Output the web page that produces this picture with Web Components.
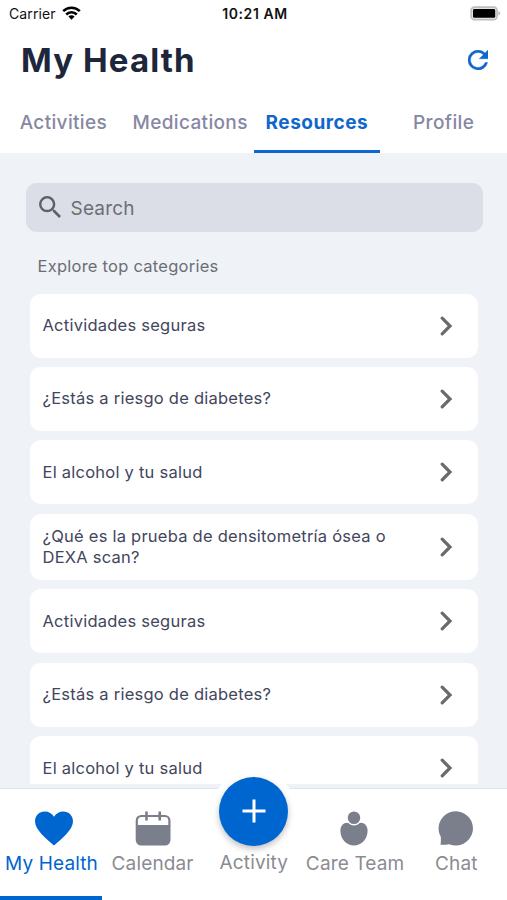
<!DOCTYPE html>
<html lang="en">
<head>
<meta charset="utf-8">
<title>My Health</title>
<style>
    body {
        margin: 0;
        font-family: Inter, "Liberation Sans", sans-serif;
    }
</style>
</head>
<body>
<health-app></health-app>

<script>
// Build a template from a string of markup
const makeTemplate = (html) => {
    const template = document.createElement("template");
    template.innerHTML = html;
    return template;
};

// Base class, clones the template of the subclass into a shadow root
class HealthElement extends HTMLElement{
    constructor(){
        super();
        this.attachShadow({mode: "open"});
        this.shadowRoot.appendChild(this.constructor.template.content.cloneNode(true));
    }
}


// Phone status bar
class StatusBar extends HealthElement{
    static template = makeTemplate(`
        <style>
        :host {
            display: grid;
            grid-template-columns: 1fr auto 1fr;
            align-items: center;
            height: 28px;
            padding: 0 7px 0 9px;
            box-sizing: border-box;
            color: #111;
            font-size: 14px;
            line-height: 28px;
        }
        .carrier {
            display: flex;
            align-items: center;
            gap: 6px;
            letter-spacing: 0.1px;
        }
        .carrier svg {
            margin-top: -2px;
        }
        .time {
            font-weight: 600;
            letter-spacing: 0.55px;
            margin-right: -1px;
        }
        .battery {
            justify-self: end;
            margin-top: -2px;
        }
        svg {
            display: block;
        }
        </style>
        <div class="carrier">
            <span>Carrier</span>
            <svg width="19" height="14" viewBox="0 0 19 14">
                <g fill="none" stroke="#000" stroke-width="2.6">
                    <path d="M1.2 5.2a11.8 11.8 0 0 1 16.6 0"/>
                    <path d="M4.2 8.5a7.5 7.5 0 0 1 10.6 0"/>
                </g>
                <path d="M9.5 13.7 6.4 10.6a4.4 4.4 0 0 1 6.2 0z"/>
            </svg>
        </div>
        <span class="time">10:21 AM</span>
        <svg class="battery" width="30" height="15" viewBox="0 0 30 15">
            <rect x="1.1" y="1.1" width="26" height="12.6" rx="3.4" fill="#e4e4e4" stroke="#bdbdbd" stroke-width="1.6"/>
            <rect x="3" y="3" width="22.2" height="8.8" rx="1.4"/>
            <path d="M28.5 5.2v4.400a2.400 2.400 0 0 0 0-4.400z" fill="#aaa"/>
        </svg>
    `);
}
customElements.define("status-bar", StatusBar);


// Page title with the reload button
class PageTitle extends HealthElement{
    static template = makeTemplate(`
        <style>
        :host {
            display: flex;
            align-items: center;
            justify-content: space-between;
            height: 64px;
            padding: 0 19px 0 21px;
        }
        h1 {
            margin: 0;
            color: #1e263c;
            font-size: 33px;
            font-weight: 650;
            line-height: 40px;
            letter-spacing: 1.1px;
        }
        svg {
            display: block;
            margin-bottom: 1px;
        }
        </style>
        <h1><slot></slot></h1>
        <svg width="20" height="20" viewBox="4 4 16 16" fill="#0f66cc" stroke="#0f66cc" stroke-width="0.3">
            <path d="M17.65 6.35A7.96 7.96 0 0 0 12 4a8 8 0 1 0 7.73 10h-2.08A6 6 0 1 1 12 6c1.66 0 3.14.69 4.22 1.78L13 11h7V4z"/>
        </svg>
    `);
}
customElements.define("page-title", PageTitle);


// One tab of the top row
class TopTab extends HealthElement{
    static template = makeTemplate(`
        <style>
        :host {
            flex: 1 1 0;
            display: block;
            box-sizing: border-box;
            height: 61px;
            padding-top: 18px;
            border-bottom: 3px solid transparent;
            color: #8688a3;
            font-size: 19px;
            font-weight: 500;
            line-height: 26px;
            letter-spacing: 0.35px;
            text-align: center;
            white-space: nowrap;
        }
        :host([active]) {
            color: #0f66cc;
            border-bottom-color: #0f66cc;
            font-weight: 700;
            letter-spacing: 0.5px;
        }
        </style>
        <slot></slot>
    `);
}
customElements.define("top-tab", TopTab);


// Search field
class SearchBox extends HealthElement{
    static template = makeTemplate(`
        <style>
        :host {
            display: flex;
            align-items: center;
            gap: 10px;
            height: 49px;
            padding-left: 13px;
            border-radius: 11px;
            background: #dbdee6;
            color: #6b6e74;
            font-size: 19px;
            letter-spacing: 0.2px;
        }
        svg {
            display: block;
            margin-top: -1px;
        }
        span {
            padding-top: 2px;
        }
        </style>
        <svg width="22" height="22" viewBox="3 3 17.5 17.5" fill="#5f6165">
            <path d="M15.5 14h-.79l-.28-.27A6.47 6.47 0 0 0 16 9.5 6.5 6.5 0 1 0 9.500 16c1.610 0 3.090-.59 4.230-1.570l.27.28v.79l5 4.990L20.490 19zm-6 0C7.010 14 5 11.990 5 9.500S7.010 5 9.500 5 14 7.010 14 9.500 11.990 14 9.500 14z"/>
        </svg>
        <span><slot></slot></span>
    `);
}
customElements.define("search-box", SearchBox);


// Category card
class CategoryCard extends HealthElement{
    static template = makeTemplate(`
        <style>
        :host {
            flex: none;
            display: flex;
            align-items: center;
            justify-content: space-between;
            box-sizing: border-box;
            min-height: 64px;
            padding: 12.2px 25px 12.2px 12.5px;
            border-radius: 11px;
            background: #fff;
            color: #42465c;
            font-size: 16.5px;
            line-height: 21px;
            letter-spacing: 0.24px;
        }
        span {
            width: 360px;
        }
        svg {
            display: block;
        }
        </style>
        <span><slot></slot></span>
        <svg width="13" height="20" viewBox="0 0 13 20" fill="none" stroke="#6a6a6a" stroke-width="3.2" stroke-linecap="round">
            <path d="M2.2 2.2 10 10 2.2 17.8"/>
        </svg>
    `);
}
customElements.define("category-card", CategoryCard);


// Item of the bottom bar: icon slot above the label
class NavItem extends HealthElement{
    static template = makeTemplate(`
        <style>
        :host {
            flex: 1 1 0;
            min-width: 0;
            position: relative;
            display: flex;
            flex-direction: column;
            align-items: center;
            box-sizing: border-box;
            padding-top: 20px;
            border-bottom: 4px solid transparent;
            color: #8a8c92;
            font-size: 19px;
            line-height: 26px;
            letter-spacing: 0.15px;
            white-space: nowrap;
        }
        :host([active]) {
            flex: 0 0 102px;
            padding-left: 1px;
            color: #0066cf;
            border-bottom-color: #0066cf;
        }
        .icon {
            display: flex;
            align-items: center;
            justify-content: center;
            height: 38px;
            margin-bottom: 4px;
        }
        :host([active]) .icon {
            padding-left: 4px;
        }
        :host([raised]) .icon {
            margin-bottom: 3px;
        }
        </style>
        <div class="icon"><slot name="icon"></slot></div>
        <slot></slot>
    `);
}
customElements.define("nav-item", NavItem);


// Round button that sticks out of the bottom bar
class AddButton extends HealthElement{
    static template = makeTemplate(`
        <style>
        :host {
            position: absolute;
            top: -20px;
            left: 50%;
            width: 84px;
            height: 84px;
            margin-left: -42px;
            border-radius: 50%;
            background: #fff;
            display: grid;
            place-items: center;
        }
        .disc {
            width: 69px;
            height: 69px;
            border-radius: 50%;
            background: #0066cf;
            display: grid;
            place-items: center;
            box-shadow: 0 3px 6px rgba(0, 0, 0, 0.25);
        }
        </style>
        <div class="disc">
            <svg width="24" height="24" viewBox="0 0 24 24" stroke="#fff" stroke-width="3">
                <path d="M12 0.5v23M0.5 12h23"/>
            </svg>
        </div>
    `);
}
customElements.define("add-button", AddButton);


// Whole screen
class HealthApp extends HealthElement{
    static template = makeTemplate(`
        <style>
        :host {
            display: flex;
            flex-direction: column;
            height: 900px;
            overflow: hidden;
            background: #eff2f7;
        }
        header {
            flex: none;
            height: 153px;
            background: #fff;
        }
        .tabs {
            display: flex;
        }
        main {
            flex: none;
            height: 631px;
            box-sizing: border-box;
            padding: 30px 24.5px 0 25.5px;
            overflow: hidden;
        }
        h2 {
            margin: 24px 0 16.5px 12px;
            color: #6b6e74;
            font-size: 16.5px;
            font-weight: 400;
            line-height: 21px;
            letter-spacing: 0.25px;
        }
        .list {
            display: flex;
            flex-direction: column;
            gap: 9.4px;
            margin: 0 5px 0 4.5px;
        }
        nav {
            flex: none;
            display: flex;
            height: 112px;
            margin-top: 4px;
            box-sizing: border-box;
            border-top: 1.5px solid #e3e6ec;
            background: #fff;
        }
        svg {
            display: block;
        }
        </style>
        <header>
            <status-bar></status-bar>
            <page-title>My Health</page-title>
            <div class="tabs">
                <top-tab>Activities</top-tab>
                <top-tab>Medications</top-tab>
                <top-tab active>Resources</top-tab>
                <top-tab>Profile</top-tab>
            </div>
        </header>
        <main>
            <search-box>Search</search-box>
            <h2>Explore top categories</h2>
            <div class="list"></div>
        </main>
        <nav>
            <nav-item active>
                <svg slot="icon" width="38" height="35" viewBox="0 0 38 35" fill="#0066cf">
                    <path d="M19 34.5C11 27.5 0 18.8 0 10.3 0 4.5 4.3.5 9.7.5c4 0 7.3 2 9.3 5.3C21 2.500 24.300.5 28.300.5 33.700.5 38 4.500 38 10.300c0 8.500-11 17.200-19 24.200z"/>
                </svg>
                My Health
            </nav-item>
            <nav-item>
                <svg slot="icon" width="36" height="35" viewBox="0 0 36 35" fill="none" stroke="#7b7f8c">
                    <rect x="1.8" y="5" width="32.6" height="28.500" rx="4.500" stroke-width="2.200"/>
                    <path d="M1.800 14h32.600v15a4.500 4.500 0 0 1-4.500 4.500H6.300a4.500 4.500 0 0 1-4.500-4.500z" fill="#7b7f8c" stroke="none"/>
                    <path d="M11.500 0.500v9M24.700 0.500v9" stroke-width="2.600"/>
                </svg>
                Calendar
            </nav-item>
            <nav-item raised>
                <add-button slot="icon"></add-button>
                Activity
            </nav-item>
            <nav-item>
                <svg slot="icon" width="30" height="35" viewBox="0 0 30 35" fill="#7b7f8c">
                    <path d="M7.500 11.800c2.200 0 3.800.9 6.500.9s4.300-.9 6.500-.9c4.400 0 7.100 3.500 7.100 8 0 8.200-6 14.700-13.600 14.700S.4 28 .4 19.800c0-4.500 2.700-8 7.100-8z"/>
                    <circle cx="14" cy="6.800" r="7" stroke="#fff" stroke-width="1.400"/>
                </svg>
                Care Team
            </nav-item>
            <nav-item>
                <svg slot="icon" width="36" height="35" viewBox="0 0 36 35" fill="#7b7f8c">
                    <path d="M17.800.3a17.100 17.100 0 1 1-6.500 32.900c-2.500.4-5.300.7-8.800.6.5-2.500.4-4.800.3-8A17.100 17.100 0 0 1 17.800.3z"/>
                </svg>
                Chat
            </nav-item>
        </nav>
    `);

    // Fill the list of categories
    connectedCallback(){
        const categories = [
            "Actividades seguras",
            "¿Estás a riesgo de diabetes?",
            "El alcohol y tu salud",
            "¿Qué es la prueba de densitometría ósea o DEXA scan?",
            "Actividades seguras",
            "¿Estás a riesgo de diabetes?",
            "El alcohol y tu salud"
        ];
        const list = this.shadowRoot.querySelector(".list");
        for(const category of categories){
            const card = document.createElement("category-card");
            card.textContent = category;
            list.appendChild(card);
        }
    }
}
customElements.define("health-app", HealthApp);
</script>
</body>
</html>
